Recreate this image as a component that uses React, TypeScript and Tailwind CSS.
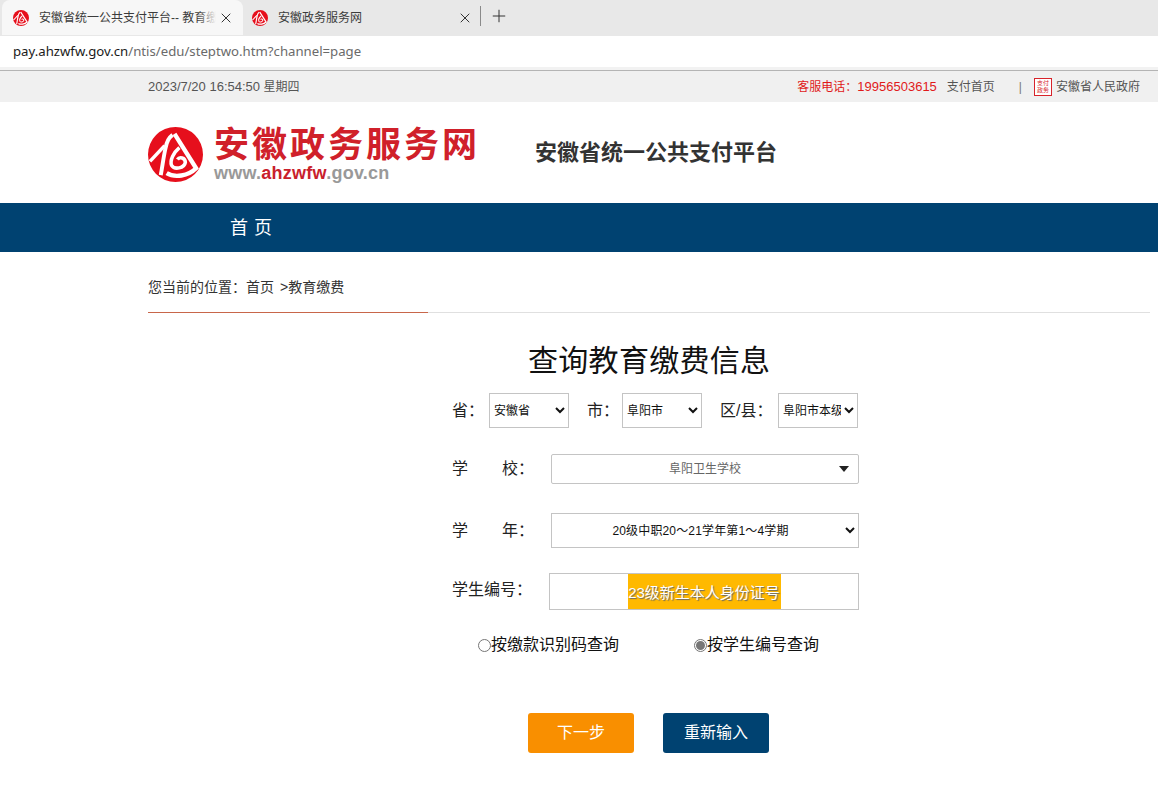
import React from 'react';
import { X, Plus } from 'lucide-react';

const cjk = { fontFamily: '"Liberation Sans", "Noto Sans CJK SC", sans-serif' };

// 安徽政务服务网 emblem, also used as the tab favicon
const Emblem = ({ size }: { size: number }) => (
  <svg width={size} height={size} viewBox="0 0 56 56" className="shrink-0">
    <circle cx="28" cy="28" r="28" fill="#e60f1c" />
    <path d="M2 35 L17 19" stroke="#fff" strokeWidth="3.6" fill="none" />
    <path d="M25 8 C21 11 19 15 18 21 C16 29 15 38 13 49" stroke="#fff" strokeWidth="4" fill="none" />
    <path d="M27 7 L49 42 C41 50 27 52 19 47" stroke="#fff" strokeWidth="4.4" fill="none" />
    <path d="M32 21 C26 26 22 34 24 39 C27 44 37 42 38 36 C38 31 32 30 30 33" stroke="#fff" strokeWidth="3.6" fill="none" />
  </svg>
);

const Tab = ({ title, active, className, closeClass }: { title: string; active?: boolean; className: string; closeClass: string }) => (
  <div className={`flex h-[35px] items-center ${className} ${active ? 'rounded-t-[8px] bg-[#f7f7f7]' : ''}`}>
    <Emblem size={16} />
    <div className="relative ml-[10px] flex-1 overflow-hidden whitespace-nowrap text-[12px] text-[#3c3c3c]">
      {title}
      {active && <div className="absolute inset-y-0 right-0 w-[18px] bg-gradient-to-r from-transparent to-[#f7f7f7]" />}
    </div>
    <X size={16} strokeWidth={1.5} className={`text-[#333] ${closeClass}`} />
  </div>
);

const Label = ({ children, className }: { children: React.ReactNode; className?: string }) => (
  <span className={`whitespace-nowrap text-[16px] text-[#222] ${className ?? ''}`}>{children}</span>
);

const Radio = ({ label, checked }: { label: string; checked?: boolean }) => (
  <div className="flex items-center">
    <span className="flex h-[13px] w-[13px] items-center justify-center rounded-full border border-[#767676] bg-white">
      {checked && <span className="h-[9px] w-[9px] rounded-full bg-[#767676]" />}
    </span>
    <span className="text-[16px] text-[#111]">{label}</span>
  </div>
);

const App: React.FC = () => {
  return (
    <div className="h-[802px] w-[1158px] overflow-hidden bg-white" style={cjk}>
      {/* browser chrome */}
      <div className="flex h-[36px] items-start bg-[#e8e8e8] pl-[2px]">
        <Tab title="安徽省统一公共支付平台-- 教育缴费" active className="w-[241px] pl-[11px]" closeClass="ml-[2px] mr-[9px]" />
        <Tab title="安徽政务服务网" className="w-[237px] pl-[9px]" closeClass="mr-[7px]" />
        <div className="mt-[6px] h-[20px] w-px bg-[#8a8a8a]" />
        <Plus size={20} strokeWidth={1.2} className="ml-[8px] mt-[6px] text-[#333]" />
      </div>
      <div className="flex h-[31px] items-center bg-white pl-[13px] text-[13.2px] text-[#6a6a6a]" style={{ fontFamily: '"Noto Sans", sans-serif' }}>
        <span className="text-[#1a1a1a]">pay.ahzwfw.gov.cn</span>/ntis/edu/steptwo.htm?channel=page
      </div>
      <div className="h-[4px] border-b border-[#b4b4b4] bg-[#f2f2f2]" />

      {/* top bar */}
      <div className="flex h-[31px] items-center justify-between bg-[#f0f0f0] pl-[148px] pr-[18px] text-[12px] text-[#555]">
        <span><span className="text-[13px]">2023/7/20 16:54:50</span> 星期四</span>
        <div className="flex items-center">
          <span className="text-[#e01a1a]">客服电话：<span className="text-[13px]">19956503615</span></span>
          <span className="ml-[10px]">支付首页</span>
          <span className="ml-[24px] text-[#777]">|</span>
          <span className="ml-[12px] flex h-[18px] w-[18px] flex-col items-center justify-center border border-[#d8232a] bg-white text-[6px] leading-[7px] text-[#d8232a]">
            <span>支付</span>
            <span>政务</span>
          </span>
          <span className="ml-[4px]">安徽省人民政府</span>
        </div>
      </div>

      {/* logo */}
      <div className="flex h-[101px] items-center pl-[148px] pt-[4px]">
        <Emblem size={55} />
        <div className="ml-[11px] flex flex-col">
          <span className="text-[35px] font-bold leading-[38px] tracking-[3px] text-[#d0202a]">安徽政务服务网</span>
          <span className="-mt-[1px] text-[18px] font-bold leading-[20px] tracking-[0.25px] text-[#999]">
            www.<span className="text-[#c9202c]">ahzwfw</span>.gov.cn
          </span>
        </div>
        <span className="-mt-[4px] ml-[55px] text-[22px] font-bold text-[#333]">安徽省统一公共支付平台</span>
      </div>

      {/* nav */}
      <div className="flex h-[49px] items-center bg-[#004271] pl-[230px] pt-[2px] text-[18px] tracking-[6px] text-white">首页</div>

      {/* breadcrumb */}
      <div className="ml-[148px] mr-[8px] h-[61px] border-b border-[#e0e0e0]">
        <div className="flex h-[61px] w-[280px] items-center border-b border-[#c8664a] pt-[11px] text-[14px] text-[#333]">
          您当前的位置：首页<span className="ml-[6px]">&gt;教育缴费</span>
        </div>
      </div>

      {/* query form */}
      <div className="ml-[452px] w-[407px]">
        <h1 className="mt-[28px] ml-[76px] text-[30px] font-normal leading-[40px] tracking-[0.3px] text-[#111]">查询教育缴费信息</h1>

        <div className="mt-[12px] flex h-[35px] items-center">
          <Label className="w-[37px]">省：</Label>
          <select className="h-[35px] w-[80px] border border-[#c4c4c4] bg-white text-[12px] text-[#111]" defaultValue="安徽省">
            <option>安徽省</option>
          </select>
          <Label className="ml-[18px] w-[35px]">市：</Label>
          <select className="h-[35px] w-[80px] border border-[#c4c4c4] bg-white text-[12px] text-[#111]" defaultValue="阜阳市">
            <option>阜阳市</option>
          </select>
          <Label className="ml-[18px] w-[58px]">区/县：</Label>
          <select className="h-[35px] w-[80px] border border-[#c4c4c4] bg-white text-[12px] text-[#111]" defaultValue="阜阳市本级">
            <option>阜阳市本级</option>
          </select>
        </div>

        <div className="mt-[26px] flex h-[30px] items-center">
          <Label className="flex w-[99px]">学<span className="w-[34px]" />校：</Label>
          <div className="relative flex h-[30px] w-[308px] items-center justify-center rounded-[2px] border border-[#c4c4c4] bg-white text-[12px] text-[#666]">
            阜阳卫生学校
            <span className="absolute right-[9px] top-[11px] h-0 w-0 border-x-[5px] border-t-[6px] border-x-transparent border-t-[#222]" />
          </div>
        </div>

        <div className="mt-[29px] flex h-[35px] items-center">
          <Label className="flex w-[99px]">学<span className="w-[34px]" />年：</Label>
          <select className="h-[35px] w-[308px] border border-[#c4c4c4] bg-white pl-[3px] text-center text-[12px] tracking-[0.15px] text-[#111] [text-align-last:center]" defaultValue="a">
            <option value="a">20级中职20～21学年第1～4学期</option>
          </select>
        </div>

        <div className="mt-[25px] flex h-[37px]">
          <Label className="w-[97px] pt-[5px]">学生编号：</Label>
          <div className="flex h-[37px] w-[310px] items-center justify-center border border-[#c4c4c4] bg-white">
            <span className="flex h-[35px] w-[153px] items-center justify-center whitespace-nowrap bg-[#ffb900] pt-[3px] text-[15px] text-white [text-shadow:1px_1px_1px_#666]">
              23级新生本人身份证号
            </span>
          </div>
        </div>

        <div className="ml-[26px] mt-[24px] flex h-[22px] items-center gap-[75px]">
          <Radio label="按缴款识别码查询" />
          <Radio label="按学生编号查询" checked />
        </div>

        <div className="ml-[76px] mt-[57px] flex gap-[29px]">
          <button className="h-[40px] w-[106px] rounded-[3px] bg-[#f98f00] text-[16px] text-white">下一步</button>
          <button className="h-[40px] w-[106px] rounded-[3px] bg-[#004271] text-[16px] text-white">重新输入</button>
        </div>
      </div>
    </div>
  );
};

export default App;
